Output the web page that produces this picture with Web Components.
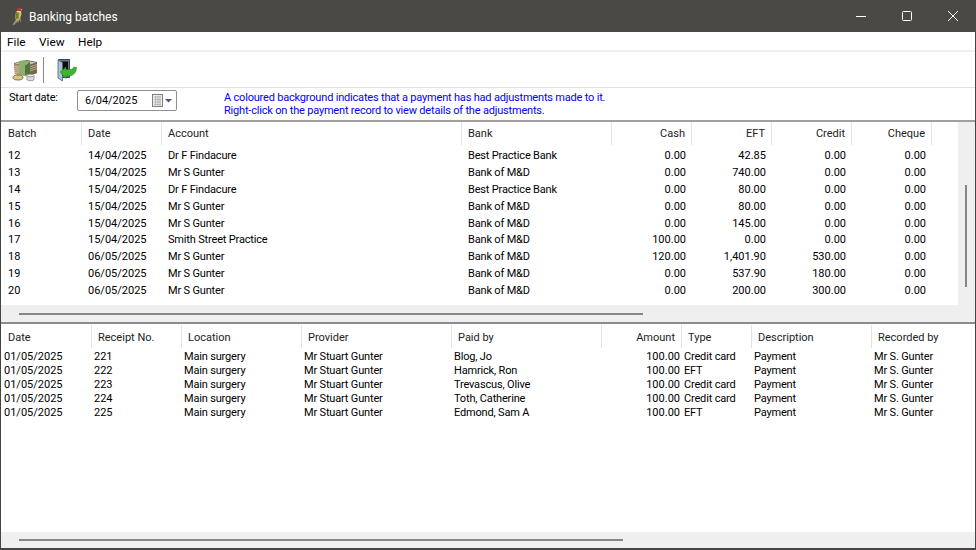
<!DOCTYPE html>
<html>
<head>
<meta charset="utf-8">
<title>Banking batches</title>
<style>
  html, body { margin: 0; height: 100%; background: #fff; }
  body { font-family: "Roboto", "Noto Sans", sans-serif; font-size: 11px; color: #000; overflow: hidden; }
</style>
</head>
<body>

<bank-window>
  <title-bar>Banking batches</title-bar>
  <menu-bar></menu-bar>
  <tool-bar></tool-bar>
  <date-row></date-row>
  <data-grid id="batches"></data-grid>
  <data-grid id="receipts"></data-grid>
</bank-window>

<script>
class BankWindow extends HTMLElement {
  constructor() {
    super()
    this.attachShadow({ mode: 'open' }).innerHTML = `
      <style>
        :host { display: flex; flex-direction: column; box-sizing: border-box; width: 976px; height: 550px;
                border: solid #45443f; border-width: 0 1px 2px 1px; background: #fff; }
      </style>
      <slot></slot>`
  }
}

class TitleBar extends HTMLElement {
  constructor() {
    super()
    this.attachShadow({ mode: 'open' }).innerHTML = `
      <style>
        :host { display: flex; align-items: center; height: 32px; flex: none; margin: 0 -1px; background: #4a4945; color: #fff; font-size: 12px; }
        .logo { width: 16px; height: 20px; margin: 0 2px 0 11px; flex: none; }
        .name { flex: 1; padding-top: 2px; }
        .ctl { width: 46px; height: 32px; display: flex; align-items: center; justify-content: center; }
        .ctl svg { width: 12px; height: 12px; fill: none; stroke: #fff; stroke-width: 1; }
      </style>
      <svg class="logo" viewBox="0 0 16 20">
        <path d="M7 11l3 1-3 3-4 4-1.500-.5z" fill="#9c9484"/>
        <path d="M5 6c1-2 4-3 5-1s.5 6-2 8-3 1-3.500 0 0-5 .5-7z" fill="#d9bd45"/>
        <path d="M5 6l3 .5-.5 6-3 1z" fill="#6f7f35"/>
        <path d="M6 3c.5-1.500 3-2 4-.8s.5 2.800-.5 3L6.500 5.500z" fill="#b33a2c"/>
        <path d="M6 5.200l3.500-.2v1.200H6z" fill="#e8e2d6"/>
        <path d="M10 3l1.500.8-1.500.6z" fill="#e0b9a0"/>
        <path d="M7.500 13.500l-.5 3M9 12.500l.5 3" stroke="#d8b58e" stroke-width=".7" fill="none"/>
      </svg>
      <span class="name"><slot></slot></span>
      <div class="ctl"><svg viewBox="0 0 12 12"><path d="M1 6.500h10"/></svg></div>
      <div class="ctl"><svg viewBox="0 0 12 12"><rect x="1.500" y="1.500" width="9" height="9" rx="1"/></svg></div>
      <div class="ctl"><svg viewBox="0 0 12 12"><path d="M1 1l10 10M11 1L1 11"/></svg></div>`
  }
}

class MenuBar extends HTMLElement {
  constructor() {
    super()
    this.attachShadow({ mode: 'open' }).innerHTML = `
      <style>
        :host { display: flex; gap: 13.500px; align-items: center; box-sizing: border-box; height: 20px; flex: none; padding: 2px 0 0 6px; border-bottom: 2px solid #f0f0f0; font-size: 11.800px; }
        span { display: block; }
      </style>
      <span>File</span><span>View</span><span>Help</span>`
  }
}

class ToolBar extends HTMLElement {
  constructor() {
    super()
    this.attachShadow({ mode: 'open' }).innerHTML = `
      <style>
        :host { display: flex; align-items: center; height: 35px; flex: none; padding-left: 11px; border-bottom: 1px solid #e3e3e3; }
        .sep { width: 1px; height: 26px; background: #8a8a8a; margin: 0 11px 0 5px; }
        svg { display: block; }
      </style>
      <svg width="26" height="24" viewBox="0 0 26 24">
        <path d="M2 5l13-3 10 2v11l-9 3-13-2z" fill="#6e6757"/>
        <path d="M2 5.500l13-2.500 9 1.500-8 3z" fill="#cfc4a4"/>
        <path d="M2 6l14 1.500V18L3 16z" fill="#a8946f"/>
        <path d="M16 7.500l9-3V15l-9 3z" fill="#74674f"/>
        <path d="M2 8.500l5 .5M2 10.500l5 .5M2 12.500l5 .5M2 14.500l5 .5M18 9l7-2.500M18 11l7-2.500M18 13l7-2.500" stroke="#d8cdae" stroke-width=".7"/>
        <path d="M7 3l5-.8 6 1.500-5 4v10l-6-1z" fill="#8fae6e"/>
        <path d="M13 7.700l5-4v11l-5 2.500z" fill="#4f7440"/>
        <ellipse cx="6" cy="19.500" rx="5" ry="2.500" fill="#dcc67c" stroke="#5f563a" stroke-width=".8"/>
        <path d="M15 17.500h7v4c0 1.500-7 1.500-7 0z" fill="#dcdcdc" stroke="#808080" stroke-width=".8"/>
        <ellipse cx="18.500" cy="17.500" rx="3.500" ry="1.300" fill="#f2f2f2" stroke="#808080" stroke-width=".8"/>
      </svg>
      <div class="sep"></div>
      <svg width="22" height="24" viewBox="0 0 22 24">
        <path d="M3.500 1.500h11v18h-11z" fill="#65798a" stroke="#3b4650"/>
        <path d="M6 3.500h7v14H6z" fill="#0d0d0d"/>
        <path d="M3 2l4.500 2.500V23L3 20z" fill="#a9c6d8" stroke="#4d6270" stroke-width=".8"/>
        <path d="M5 14l6-5v2.500h4c2 0 3-1 4-2.500l2.500.5c0 5.500-3.500 8.500-8.500 8.500h-2v2.500z" fill="#3fb52f" stroke="#1f7a18" stroke-width=".5"/>
      </svg>`
  }
}

class DateRow extends HTMLElement {
  constructor() {
    super()
    this.attachShadow({ mode: 'open' }).innerHTML = `
      <style>
        :host { display: flex; align-items: flex-start; height: 32px; flex: none; border-bottom: 2px solid #a0a0a0; }
        .lbl { margin: 3px 0 0 8px; width: 68px; line-height: 14px; letter-spacing: -.17px; }
        .pick { box-sizing: border-box; display: flex; align-items: center; width: 100px; height: 21px; margin-top: 2px; padding: 0 4px 0 7px; border: 1px solid #8f8f8f; border-radius: 2px; }
        .pick span { flex: 1; }
        .info { margin: 3px 0 0 47px; color: #0000ff; line-height: 13px; letter-spacing: -.19px; }
        .info div { white-space: nowrap; }
      </style>
      <div class="lbl">Start date:</div>
      <div class="pick">
        <span>6/04/2025</span>
        <svg width="20" height="13" viewBox="0 0 20 13">
          <rect x=".5" y=".5" width="10" height="12" fill="#ececec" stroke="#808080"/>
          <path d="M2 3h7M2 5.500h7M2 8h7M2 10.500h7M3.500 2v9.500M6 2v9.500M8 2v9.500" stroke="#a9a9a9" stroke-width=".7"/>
          <path d="M13 5h7l-3.500 3.500z" fill="#3f5a7a"/>
        </svg>
      </div>
      <div class="info">
        <div>A coloured background indicates that a payment has had adjustments made to it.</div>
        <div>Right-click on the payment record to view details of the adjustments.</div>
      </div>`
  }
}

class DataGrid extends HTMLElement {
  constructor() {
    super()
    this.attachShadow({ mode: 'open' })
  }

  // cfg: cols [title, width, align], rows, sizes of the parts
  set config(cfg) {
    var tpl = cfg.cols.map(c => c[1] + 'px').join(' ')
    var head = cfg.cols.map(c => `<div class="hd ${c[2] || ''}">${c[0]}</div>`).join('')
    var rows = cfg.rows.map((r, idx) =>
      `<div class="row ${idx === cfg.shortRow ? 'short' : ''}">${r.map((v, i) => {
        var num = /^[\d\/,.]+$/.test(v) ? 'n' : ''
        return `<div class="cell ${cfg.cols[i][2] || ''} ${num}">${v}</div>`
      }).join('')}</div>`
    ).join('')
    var vbar = cfg.vbar ? `<div class="vbar"><div class="vthumb"></div></div>` : ''

    this.shadowRoot.innerHTML = `
      <style>
        :host { display: flex; flex: ${cfg.grow ? '1' : 'none'}; ${cfg.height ? 'height:' + cfg.height + 'px;' : ''}
                border-bottom: ${cfg.rule ? '2px solid #8c8c8c' : '0'}; min-height: 0; }
        .main { flex: 1; min-width: 0; display: flex; flex-direction: column; }
        .pane { flex: 1; min-height: 0; padding-top: ${cfg.top}px; overflow: hidden; }
        .head, .row { display: grid; grid-template-columns: ${tpl}; }
        .head { height: ${cfg.headH}px; margin-bottom: ${cfg.headGap}px; }
        .hd { box-sizing: border-box; padding: 0 6px 0 6px; line-height: ${cfg.headLine}px; color: #222; border-right: 1px solid #e4e4e4; white-space: nowrap; overflow: hidden; }
        .hd:first-child { padding-left: 7px; }
        .row { height: ${cfg.rowH}px; line-height: ${cfg.rowH}px; }
        .row.short { height: ${cfg.rowH - 1}px; }
        .cell { box-sizing: border-box; padding: 0 ${cfg.cellPadR}px 0 ${cfg.cellPad}px; white-space: nowrap; overflow: hidden; letter-spacing: -.17px; }
        .cell.n { letter-spacing: 0; }
        .cell:first-child { padding-left: ${cfg.firstPad}px; }
        .r { text-align: right; }
        .hbar { display: flex; align-items: center; flex: none; height: ${cfg.barH}px; background: #efefef; padding-left: ${cfg.thumbX}px; }
        .hthumb { width: ${cfg.thumbW}px; height: 2px; background: #868686; }
        .vbar { flex: none; width: 17px; background: #efefef; padding: ${cfg.vTop}px 0 0 7px; box-sizing: border-box; }
        .vthumb { width: 2px; height: ${cfg.vH}px; background: #868686; }
      </style>
      <div class="main">
        <div class="pane">
          <div class="head">${head}</div>
          ${rows}
        </div>
        <div class="hbar"><div class="hthumb"></div></div>
      </div>
      ${vbar}`
  }
}

customElements.define('bank-window', BankWindow)
customElements.define('title-bar', TitleBar)
customElements.define('menu-bar', MenuBar)
customElements.define('tool-bar', ToolBar)
customElements.define('date-row', DateRow)
customElements.define('data-grid', DataGrid)

document.getElementById('batches').config = {
  height: 200, rule: true, vbar: true, top: 0, headH: 23, headLine: 24, headGap: 2, rowH: 17, shortRow: 4,
  cellPad: 6, firstPad: 7, cellPadR: 6, barH: 17, thumbX: 18, thumbW: 624, vTop: 63, vH: 102,
  cols: [['Batch', 81], ['Date', 80], ['Account', 300], ['Bank', 150], ['Cash', 80, 'r'], ['EFT', 80, 'r'], ['Credit', 80, 'r'], ['Cheque', 80, 'r']],
  rows: [
    ['12', '14/04/2025', 'Dr F Findacure', 'Best Practice Bank', '0.00', '42.85', '0.00', '0.00'],
    ['13', '15/04/2025', 'Mr S Gunter', 'Bank of M&amp;D', '0.00', '740.00', '0.00', '0.00'],
    ['14', '15/04/2025', 'Dr F Findacure', 'Best Practice Bank', '0.00', '80.00', '0.00', '0.00'],
    ['15', '15/04/2025', 'Mr S Gunter', 'Bank of M&amp;D', '0.00', '80.00', '0.00', '0.00'],
    ['16', '15/04/2025', 'Mr S Gunter', 'Bank of M&amp;D', '0.00', '145.00', '0.00', '0.00'],
    ['17', '15/04/2025', 'Smith Street Practice', 'Bank of M&amp;D', '100.00', '0.00', '0.00', '0.00'],
    ['18', '06/05/2025', 'Mr S Gunter', 'Bank of M&amp;D', '120.00', '1,401.90', '530.00', '0.00'],
    ['19', '06/05/2025', 'Mr S Gunter', 'Bank of M&amp;D', '0.00', '537.90', '180.00', '0.00'],
    ['20', '06/05/2025', 'Mr S Gunter', 'Bank of M&amp;D', '0.00', '200.00', '300.00', '0.00']
  ]
}

document.getElementById('receipts').config = {
  grow: true, top: 1, headH: 23, headLine: 26, headGap: 2, rowH: 14,
  cellPad: 2, firstPad: 3, cellPadR: 2, barH: 16, thumbX: 18, thumbW: 604,
  cols: [['Date', 91], ['Receipt No.', 90], ['Location', 120], ['Provider', 150], ['Paid by', 150], ['Amount', 80, 'r'], ['Type', 70], ['Description', 120], ['Recorded by', 104]],
  rows: [
    ['01/05/2025', '221', 'Main surgery', 'Mr Stuart Gunter', 'Blog, Jo', '100.00', 'Credit card', 'Payment', 'Mr S. Gunter'],
    ['01/05/2025', '222', 'Main surgery', 'Mr Stuart Gunter', 'Hamrick, Ron', '100.00', 'EFT', 'Payment', 'Mr S. Gunter'],
    ['01/05/2025', '223', 'Main surgery', 'Mr Stuart Gunter', 'Trevascus, Olive', '100.00', 'Credit card', 'Payment', 'Mr S. Gunter'],
    ['01/05/2025', '224', 'Main surgery', 'Mr Stuart Gunter', 'Toth, Catherine', '100.00', 'Credit card', 'Payment', 'Mr S. Gunter'],
    ['01/05/2025', '225', 'Main surgery', 'Mr Stuart Gunter', 'Edmond, Sam A', '100.00', 'EFT', 'Payment', 'Mr S. Gunter']
  ]
}
</script>
</body>
</html>
